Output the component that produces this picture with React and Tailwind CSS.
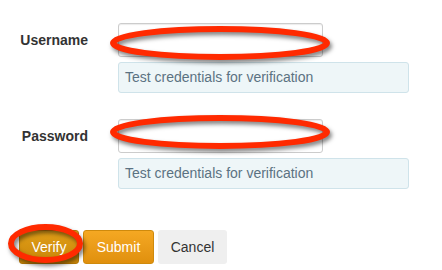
import React from 'react';

const FIELDS = [
  { label: 'Username', type: 'text' },
  { label: 'Password', type: 'password' },
];

function Field({ label, type }) {
  return (
    <div className="flex items-start">
      <label className="w-[88px] h-[34px] flex items-center justify-end text-[14px] font-bold text-[#333]">
        {label}
      </label>
      <div className="ml-[30px] flex flex-col gap-[5px]">
        <input
          type={type}
          className="w-[205px] h-[34px] bg-white border border-[#cccccc] rounded-[3px] shadow-[inset_0_1px_1px_rgba(0,0,0,0.08)] outline-none"
        />
        <div className="w-[291px] h-[31px] flex items-center px-[6px] bg-[#eef6f8] border border-[#cfe3ea] rounded-[3px] text-[14px] text-[#5b7282]">
          Test credentials for verification
        </div>
      </div>
    </div>
  );
}

export default function App() {
  return (
    <div className="relative w-[442px] h-[270px] bg-white overflow-hidden font-['Liberation_Sans',Arial,sans-serif]">
      <div className="pt-[23px] flex flex-col gap-[26px]">
        {FIELDS.map(f => <Field key={f.label} {...f} />)}
      </div>

      <div className="mt-[41px] pl-[19px] flex gap-[4px]">
        <button className="w-[60px] h-[34px] rounded-[3px] border border-[#b87a06] bg-gradient-to-b from-[#e09e18] to-[#c98608] text-white text-[14px]">
          Verify
        </button>
        <button className="w-[71px] h-[34px] rounded-[3px] border border-[#cf8a0c] bg-gradient-to-b from-[#f5a822] to-[#e0900d] text-white text-[14px]">
          Submit
        </button>
        <button className="w-[69px] h-[34px] rounded-[3px] bg-[#efefef] text-[#333] text-[14px]">
          Cancel
        </button>
      </div>

      {/* red annotation marks */}
      <svg
        className="absolute inset-0 pointer-events-none drop-shadow-[2px_3px_2px_rgba(0,0,0,0.5)]"
        width="442"
        height="270"
      >
        <g fill="none" stroke="#ff2a00" strokeWidth="6">
          <ellipse cx="220" cy="43" rx="107" ry="14" />
          <ellipse cx="220" cy="132" rx="107" ry="14" />
          <ellipse cx="45.5" cy="243.5" rx="34.5" ry="16.5" />
        </g>
      </svg>
    </div>
  );
}
